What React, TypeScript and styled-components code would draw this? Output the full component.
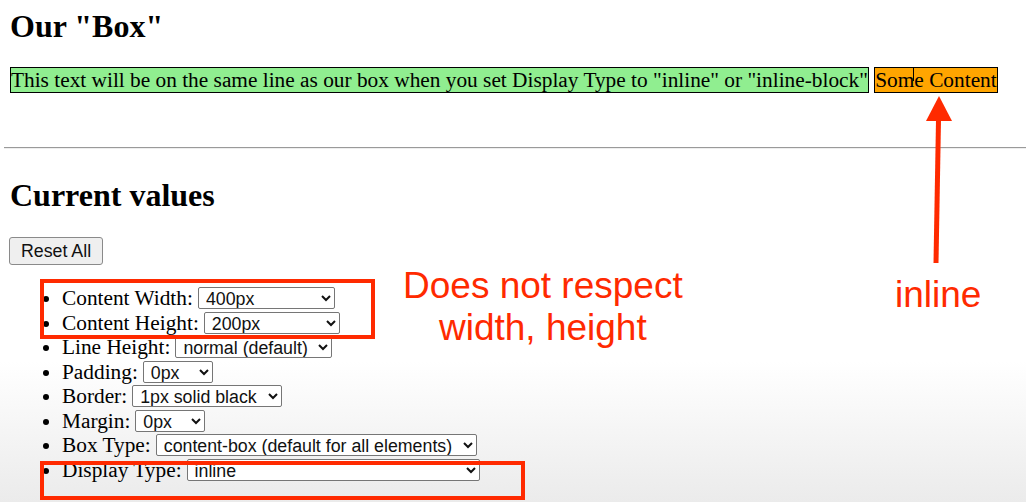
import React from 'react';
import styled, { createGlobalStyle } from 'styled-components';

const RED = '#ff2a00';

const GlobalStyle = createGlobalStyle`
  html {
    height: 100%;
    background: linear-gradient(to bottom, #ffffff 0%, #ffffff 72%, #ebebeb 100%);
  }

  body {
    margin: 0;
    font-family: "Liberation Serif", "Times New Roman", serif;
    font-size: 21.33px;
    color: #000;
  }
`;

const Page = styled.div`
  position: relative;
  min-height: 502px;
  padding: 8px 0 0 10px;
  box-sizing: border-box;
  overflow: hidden;
`;

const Heading = styled.h2<{ $top?: number }>`
  font-size: 32px;
  font-weight: bold;
  line-height: normal;
  margin: ${p => p.$top ?? 0}px 0 23px;
`;

const BoxLine = styled.div`
  line-height: normal;
`;

const SampleText = styled.span`
  background: #90ee90;
  border: 1px solid #000;
`;

const SampleBox = styled.span`
  position: relative;
  background: #ffa500;
  border: 1px solid #000;
`;

const Caret = styled.span`
  position: absolute;
  left: 38px;
  top: 0;
  width: 1px;
  height: 13px;
  background: #000;
`;

const Rule = styled.hr`
  margin: 54px 0 0 -6px;
  border: none;
  border-top: 1px solid #9a9a9a;
  border-bottom: 1px solid #eeeeee;
`;

const ResetButton = styled.button`
  display: block;
  margin: 4px 0 0 -1px;
  padding: 3px 11px;
  font-family: "Liberation Sans", Arial, sans-serif;
  font-size: 17.78px;
  line-height: 20px;
  color: #111;
  background: #efefef;
  border: 1px solid #8a8a8a;
  border-radius: 3px;
`;

const ValueList = styled.ul`
  margin: 21px 0 0;
  padding-left: 52px;
`;

const ValueItem = styled.li`
  line-height: 24.5px;
  height: 24.5px;
`;

const Picker = styled.select<{ $width: number }>`
  width: ${p => p.$width}px;
  height: 22px;
  margin-left: 5px;
  padding: 0 0 0 3px;
  font-family: "Liberation Sans", Arial, sans-serif;
  font-size: 17.78px;
  color: #111;
  background: #fff;
  border: 1px solid #767676;
  border-radius: 2px;
  vertical-align: baseline;
`;

const Callout = styled.div<{ $left: number; $top: number; $width: number; $height: number }>`
  position: absolute;
  left: ${p => p.$left}px;
  top: ${p => p.$top}px;
  width: ${p => p.$width}px;
  height: ${p => p.$height}px;
  border: 4px solid ${RED};
  box-sizing: border-box;
`;

const Note = styled.div<{ $left: number; $top: number }>`
  position: absolute;
  left: ${p => p.$left}px;
  top: ${p => p.$top}px;
  font-family: "Liberation Sans", Arial, sans-serif;
  font-size: 37px;
  line-height: 42px;
  color: ${RED};
  text-align: center;
  white-space: nowrap;
`;

const Arrow = styled.svg`
  position: absolute;
  left: 920px;
  top: 94px;
`;

const rows: { label: string; value: string; width: number }[] = [
  { label: 'Content Width:', value: '400px', width: 137 },
  { label: 'Content Height:', value: '200px', width: 136 },
  { label: 'Line Height:', value: 'normal (default)', width: 157 },
  { label: 'Padding:', value: '0px', width: 70 },
  { label: 'Border:', value: '1px solid black', width: 150 },
  { label: 'Margin:', value: '0px', width: 70 },
  { label: 'Box Type:', value: 'content-box (default for all elements)', width: 321 },
  { label: 'Display Type:', value: 'inline', width: 293 },
];

export default function App() {
  return (
    <Page>
      <GlobalStyle />
      <Heading>Our "Box"</Heading>
      <BoxLine>
        <SampleText>
          This text will be on the same line as our box when you set Display Type to "inline" or "inline-block"
        </SampleText>{' '}
        <SampleBox>
          Some Content
          <Caret />
        </SampleBox>
      </BoxLine>
      <Rule />
      <Heading $top={28}>Current values</Heading>
      <ResetButton>Reset All</ResetButton>
      <ValueList>
        {rows.map(r => (
          <ValueItem key={r.label}>
            {r.label}
            <Picker $width={r.width} defaultValue={r.value}>
              <option value={r.value}>{r.value}</option>
            </Picker>
          </ValueItem>
        ))}
      </ValueList>

      <Callout $left={40} $top={279} $width={335} $height={60} />
      <Callout $left={40} $top={461} $width={485} $height={39} />
      <Note $left={403} $top={265}>
        Does not respect
        <br />
        width, height
      </Note>
      <Note $left={895} $top={274}>inline</Note>
      <Arrow width="40" height="172" viewBox="0 0 40 172">
        <polygon points="19,2 6,27 32,27" fill={RED} />
        <line x1="18.5" y1="26" x2="16" y2="169" stroke={RED} strokeWidth="5" />
      </Arrow>
    </Page>
  );
}
